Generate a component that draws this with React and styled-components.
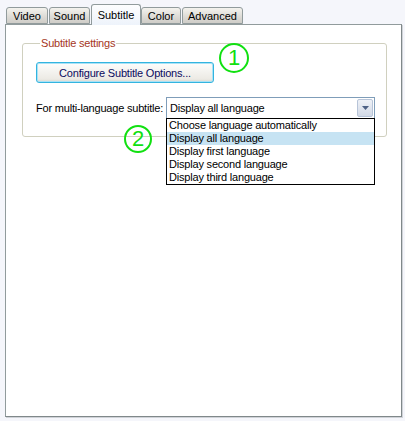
import React, { useState } from 'react';
import styled, { createGlobalStyle } from 'styled-components';

const GlobalStyle = createGlobalStyle`
  html, body {
    margin: 0;
    padding: 0;
    background: #f5f6fb;
  }
  body {
    font-family: "Liberation Sans", Arial, sans-serif;
    font-size: 11px;
    letter-spacing: -0.2px;
    color: #000;
  }
`;

const Window = styled.div`
  width: 405px;
  height: 421px;
  padding: 2px 3px 0 5px;
  box-sizing: border-box;
  display: flex;
  flex-direction: column;
`;

const TabStrip = styled.div`
  display: flex;
  align-items: flex-end;
  padding-left: 1px;
  height: 22px;
  position: relative;
  z-index: 1;
`;

const Tab = styled.div`
  width: ${(p) => p.$w}px;
  height: ${(p) => (p.$active ? '21px' : '17px')};
  margin: ${(p) => (p.$active ? '0 0 -1px 0' : '0 1px 0 0')};
  box-sizing: border-box;
  display: flex;
  align-items: center;
  justify-content: center;
  padding-top: ${(p) => (p.$active ? '0' : '1px')};
  font-size: 11px;
  letter-spacing: 0;
  border: 1px solid #919b9c;
  border-bottom: ${(p) => (p.$active ? 'none' : '1px solid #919b9c')};
  border-radius: 3px 3px 0 0;
  background: ${(p) =>
    p.$active
      ? 'linear-gradient(#fdfdfe, #eef3fb)'
      : 'linear-gradient(#f4f3ee, #dcdad5 60%, #cfcdc8)'};
  cursor: default;
`;

const Panel = styled.div`
  flex: 1;
  margin-bottom: 4px;
  background: #fff;
  border: 1px solid #919b9c;
  border-right-color: #80888a;
  border-bottom-color: #80888a;
  box-shadow: 1px 1px 0 #d0d3d8;
  padding: 12px 14px 0 16px;
  position: relative;
`;

const GroupBox = styled.fieldset`
  margin: 0;
  border: 1px solid #d0d0bf;
  border-radius: 3px;
  padding: 13px 0 17px 13px;
  position: relative;
`;

const Legend = styled.legend`
  color: #a5361c;
  padding: 0 1px;
  margin-left: 4px;
  font-size: 11px;
`;

const PushButton = styled.button`
  width: 178px;
  height: 21px;
  font-family: inherit;
  font-size: 11px;
  letter-spacing: -0.2px;
  color: #0b0b5e;
  border: 1px solid #33b4df;
  border-radius: 3px;
  background: linear-gradient(#fdfdfc, #eceae4 85%, #d8d5cc);
  box-shadow: inset 0 0 0 1px #a9e2f6;
  padding: 0;
  cursor: default;
`;

const Row = styled.div`
  display: flex;
  align-items: center;
  margin-top: 14px;
  gap: 3px;
`;

const Label = styled.span`
  font-size: 11px;
`;

const ComboWrap = styled.div`
  position: relative;
  width: 209px;
`;

const Combo = styled.div`
  height: 22px;
  box-sizing: border-box;
  border: 1px solid #7f9db9;
  background: #fff;
  display: flex;
  align-items: center;
  padding-left: 3px;
  font-size: 11px;
`;

const ComboText = styled.span`
  flex: 1;
`;

const DropButton = styled.div`
  width: 16px;
  height: 18px;
  margin-right: 1px;
  box-sizing: border-box;
  border: 1px solid #b7c4d8;
  border-radius: 2px;
  background: linear-gradient(#eef1f7, #d2d9e6);
  display: flex;
  align-items: center;
  justify-content: center;
`;

const DropList = styled.ul`
  position: absolute;
  left: 0;
  top: 21px;
  width: 209px;
  box-sizing: border-box;
  margin: 0;
  padding: 0;
  list-style: none;
  border: 1px solid #000;
  background: #fff;
  z-index: 3;
`;

const DropItem = styled.li`
  height: 13px;
  line-height: 13px;
  padding-left: 2px;
  font-size: 11px;
  background: ${(p) => (p.$selected ? '#c6e3f3' : 'transparent')};
`;

const Marker = styled.div`
  position: absolute;
  left: ${(p) => p.$x}px;
  top: ${(p) => p.$y}px;
  width: ${(p) => p.$size}px;
  height: ${(p) => p.$size}px;
  border: 2px solid #11e011;
  border-radius: 50%;
  color: #11e011;
  font-size: 22px;
  line-height: ${(p) => p.$size}px;
  text-align: center;
  letter-spacing: 0;
  z-index: 4;
`;

const tabs = [
  { name: 'Video', w: 42 },
  { name: 'Sound', w: 41 },
  { name: 'Subtitle', w: 50 },
  { name: 'Color', w: 40 },
  { name: 'Advanced', w: 61 },
];

const languages = [
  'Choose language automatically',
  'Display all language',
  'Display first language',
  'Display second language',
  'Display third language',
];

export default function App() {
  const [active] = useState('Subtitle');
  const [choice] = useState(1);

  return (
    <>
      <GlobalStyle />
      <Window>
        <TabStrip>
          {tabs.map((t) => (
            <Tab key={t.name} $w={t.w} $active={t.name === active}>
              {t.name}
            </Tab>
          ))}
        </TabStrip>
        <Panel>
          <GroupBox>
            <Legend>Subtitle settings</Legend>
            <PushButton>Configure Subtitle Options...</PushButton>
            <Row>
              <Label>For multi-language subtitle:</Label>
              <ComboWrap>
                <Combo>
                  <ComboText>{languages[choice]}</ComboText>
                  <DropButton>
                    <svg width="7" height="4" viewBox="0 0 7 4">
                      <path d="M0 0h7L3.5 4z" fill="#4d6185" />
                    </svg>
                  </DropButton>
                </Combo>
                <DropList>
                  {languages.map((l, i) => (
                    <DropItem key={l} $selected={i === choice}>
                      {l}
                    </DropItem>
                  ))}
                </DropList>
              </ComboWrap>
            </Row>
          </GroupBox>
          <Marker $x={213} $y={18} $size={26}>1</Marker>
          <Marker $x={118} $y={100} $size={24}>2</Marker>
        </Panel>
      </Window>
    </>
  );
}
